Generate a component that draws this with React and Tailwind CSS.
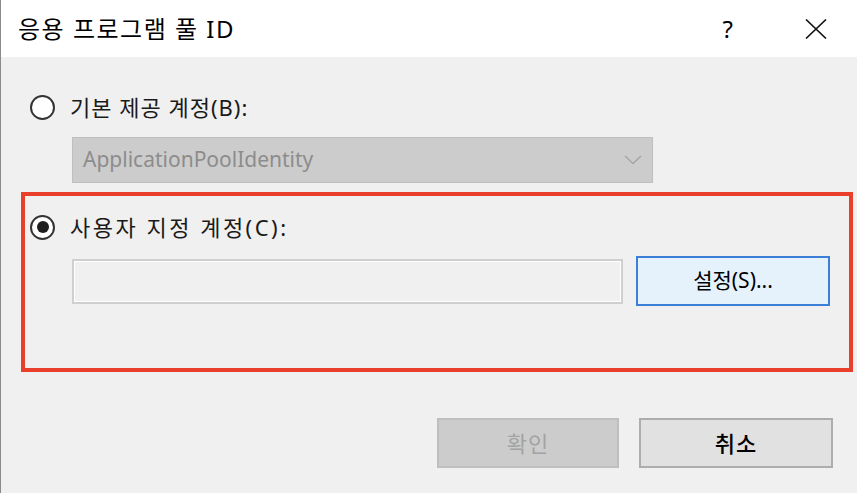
const font = { fontFamily: '"Noto Sans", "Noto Sans CJK KR", sans-serif' };

const Radio = ({ checked }) => (
  <span className="w-[25px] h-[25px] rounded-full border-2 border-[#333333] bg-white flex items-center justify-center shrink-0">
    {checked && <span className="w-[12px] h-[12px] rounded-full bg-[#1f1f1f]" />}
  </span>
);

export default function App() {
  return (
    <div
      className="w-[857px] h-[493px] bg-[#f0f0f0] border-l border-[#8a8a8a] flex flex-col text-[#1a1a1a] overflow-hidden"
      style={font}
    >
      {/* Title bar */}
      <div className="h-[57px] bg-white flex items-center pl-[17px] shrink-0">
        <span className="text-[24px] tracking-[1.5px] text-black">응용 프로그램 풀 ID</span>
        <div className="ml-auto flex items-center">
          <span className="text-[24px] text-black leading-none mr-[72px]">?</span>
          <svg width="22" height="20" viewBox="0 0 22 20" className="mr-[30px]">
            <path d="M1 0.5 L21 19.5 M21 0.5 L1 19.5" stroke="#111" strokeWidth="1.6" fill="none" />
          </svg>
        </div>
      </div>

      {/* Body */}
      <div className="flex flex-col">
        {/* Default account */}
        <div className="flex items-center gap-[15px] ml-[29px] mt-[35px] h-[30px]">
          <Radio />
          <span className="text-[22px] tracking-[1px]">기본 제공 계정(B):</span>
        </div>
        <div className="ml-[71px] mt-[15px] w-[581px] h-[46px] bg-[#cccccc] border border-[#bfbfbf] flex items-center pl-[10px] pr-[10px]">
          <span className="text-[21px] text-[#8c8c8c]">ApplicationPoolIdentity</span>
          <svg width="18" height="10" viewBox="0 0 18 10" className="ml-auto">
            <path d="M1 1 L9 8.5 L17 1" stroke="#a6a6a6" strokeWidth="1.5" fill="none" />
          </svg>
        </div>

        {/* Custom account (highlighted) */}
        <div className="ml-[20px] mt-[9px] w-[832px] h-[180px] border-4 border-[#e8402a] flex flex-col">
          <div className="flex items-center gap-[15px] ml-[5px] mt-[16px] h-[30px]">
            <Radio checked />
            <span className="text-[22px] tracking-[2.5px]">사용자 지정 계정(C):</span>
          </div>
          <div className="flex items-center ml-[47px] mt-[14px] gap-[13px]">
            <div className="w-[551px] h-[45px] border-2 border-[#cfcfcf] bg-[#f0f0f0] shadow-[inset_0_0_0_1px_#ffffff]" />
            <button className="w-[194px] h-[50px] border-2 border-[#3b7fd6] bg-[#e5f1fb] text-[21px] text-black">
              설정(S)...
            </button>
          </div>
        </div>

        {/* Footer buttons */}
        <div className="flex justify-end gap-[20px] mr-[24px] mt-[46px]">
          <button className="w-[182px] h-[50px] bg-[#cccccc] border-2 border-[#bfbfbf] text-[22px] tracking-[1px] text-[#a3a3a3]">
            확인
          </button>
          <button className="w-[194px] h-[50px] bg-[#e1e1e1] border-2 border-[#adadad] text-[22px] tracking-[1px] text-black font-medium">
            취소
          </button>
        </div>
      </div>
    </div>
  );
}
